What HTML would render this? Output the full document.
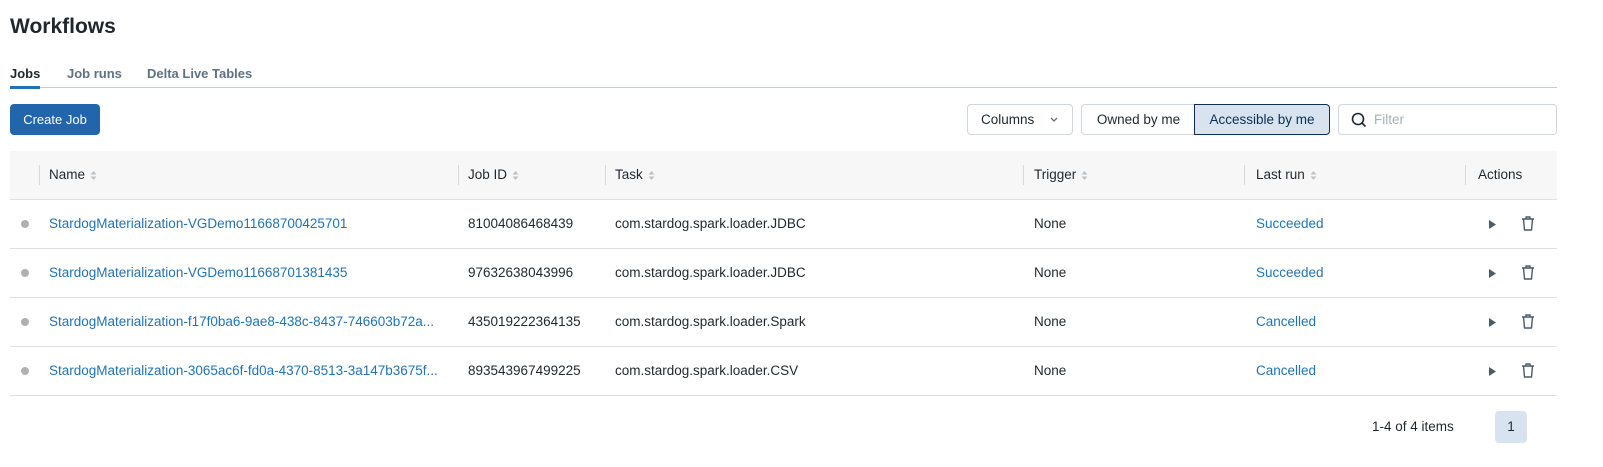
<!DOCTYPE html>
<html><head><style>
*{box-sizing:border-box;margin:0;padding:0}
body{width:1603px;height:467px;background:#fff;font-family:"Liberation Sans",Arial,sans-serif;color:#1f272d;position:relative;overflow:hidden;font-size:13.5px}
.a{position:absolute;white-space:nowrap}
h1{position:absolute;left:10px;top:15px;font-size:21px;font-weight:bold;color:#1f272d}
.tab{position:absolute;top:66px;font-size:13px;font-weight:bold;color:#5f7281}
.sep{position:absolute;width:1px;height:20px;top:165px;background:#d1d9e1}
.hl{position:absolute;left:10px;width:1547px;height:1px;background:#e0e0e0}
.lnk{color:#2272b4}
.dot{position:absolute;left:21px;width:8px;height:8px;border-radius:50%;background:#b0b0b0}
.sort{display:inline-block;vertical-align:middle;margin-left:5px;width:7px;height:11px}
</style></head><body>
<h1>Workflows</h1>
<div class="tab" style="left:10px;color:#1f272d">Jobs</div>
<div class="tab" style="left:67px">Job runs</div>
<div class="tab" style="left:147px">Delta Live Tables</div>
<div class="a" style="left:10px;top:87px;width:1547px;height:1px;background:#c4ccd6"></div>
<div class="a" style="left:10px;top:86px;width:30px;height:3px;background:#2272b4"></div>
<div class="a" style="left:10px;top:104px;width:90px;height:31px;background:#2166ab;border-radius:4px;color:#fff;font-size:13px;line-height:31px;text-align:center">Create Job</div>
<div class="a" style="left:967px;top:104px;width:106px;height:31px;border:1px solid #cfd6dc;border-radius:4px;line-height:29px;padding-left:13px">Columns<svg style="position:absolute;left:82px;top:12px" width="8" height="6"><path d="M1 1l3 3 3-3" stroke="#5f7281" fill="none" stroke-width="1.3"/></svg></div>
<div class="a" style="left:1081px;top:104px;width:115px;height:31px;border:1px solid #cfd6dc;border-radius:4px 0 0 4px;line-height:29px;text-align:center">Owned by me</div>
<div class="a" style="left:1194px;top:104px;width:136px;height:31px;border:1px solid #0e2f4f;background:#d7e4f0;border-radius:0 4px 4px 0;line-height:29px;text-align:center;color:#0e2f4f">Accessible by me</div>
<div class="a" style="left:1338px;top:104px;width:219px;height:31px;border:1px solid #cfd6dc;border-radius:4px;line-height:29px;padding-left:35px;color:#a6b0b8">Filter
<svg style="position:absolute;left:12px;top:7px" width="16" height="16"><circle cx="7" cy="7" r="5.5" stroke="#1f272d" stroke-width="1.6" fill="none"/><path d="M11 11l3.5 3.5" stroke="#1f272d" stroke-width="1.6"/></svg></div>
<div class="a" style="left:10px;top:151px;width:1547px;height:48px;background:#f7f7f7"></div>
<div class="sep" style="left:39px"></div><div class="sep" style="left:458px"></div><div class="sep" style="left:605px"></div><div class="sep" style="left:1023px"></div><div class="sep" style="left:1244px"></div><div class="sep" style="left:1465px"></div>
<svg width="0" height="0" style="position:absolute"><defs><g id="s"><path d="M0.5 4.5L3.5 1 6.5 4.5Z M0.5 6.5L3.5 10 6.5 6.5Z" fill="#bcc3c9"/></g></defs></svg>
<div class="a" style="left:49px;top:167px">Name<svg class="sort"><use href="#s"/></svg></div>
<div class="a" style="left:468px;top:167px">Job ID<svg class="sort"><use href="#s"/></svg></div>
<div class="a" style="left:615px;top:167px">Task<svg class="sort"><use href="#s"/></svg></div>
<div class="a" style="left:1034px;top:167px">Trigger<svg class="sort"><use href="#s"/></svg></div>
<div class="a" style="left:1256px;top:167px">Last run<svg class="sort"><use href="#s"/></svg></div>
<div class="a" style="left:1478px;top:167px">Actions</div>
<div class="hl" style="top:199px"></div>
<div class="hl" style="top:248px"></div>
<div class="hl" style="top:297px"></div>
<div class="hl" style="top:346px"></div>
<div class="hl" style="top:395px"></div>
<svg width="0" height="0" style="position:absolute"><defs>
<g id="p"><path d="M0 0L7 4.5 0 9Z" fill="#4a5b6a"/></g>
<g id="t"><path d="M1 3h12M5 3V1h4v2M2.5 3l1 11h7l1-11" stroke="#4a5b6a" stroke-width="1.4" fill="none" stroke-linejoin="round"/></g></defs></svg>

<div class="dot" style="top:220px"></div>
<div class="a lnk" style="left:49px;top:216px">StardogMaterialization-VGDemo11668700425701</div>
<div class="a" style="left:468px;top:216px">81004086468439</div>
<div class="a" style="left:615px;top:216px">com.stardog.spark.loader.JDBC</div>
<div class="a" style="left:1034px;top:216px">None</div>
<div class="a lnk" style="left:1256px;top:216px">Succeeded</div>
<svg class="a" style="left:1489px;top:220px" width="8" height="10"><use href="#p"/></svg>
<svg class="a" style="left:1521px;top:216px" width="14" height="16"><use href="#t"/></svg>

<div class="dot" style="top:269px"></div>
<div class="a lnk" style="left:49px;top:265px">StardogMaterialization-VGDemo11668701381435</div>
<div class="a" style="left:468px;top:265px">97632638043996</div>
<div class="a" style="left:615px;top:265px">com.stardog.spark.loader.JDBC</div>
<div class="a" style="left:1034px;top:265px">None</div>
<div class="a lnk" style="left:1256px;top:265px">Succeeded</div>
<svg class="a" style="left:1489px;top:269px" width="8" height="10"><use href="#p"/></svg>
<svg class="a" style="left:1521px;top:265px" width="14" height="16"><use href="#t"/></svg>

<div class="dot" style="top:318px"></div>
<div class="a lnk" style="left:49px;top:314px">StardogMaterialization-f17f0ba6-9ae8-438c-8437-746603b72a...</div>
<div class="a" style="left:468px;top:314px">435019222364135</div>
<div class="a" style="left:615px;top:314px">com.stardog.spark.loader.Spark</div>
<div class="a" style="left:1034px;top:314px">None</div>
<div class="a lnk" style="left:1256px;top:314px">Cancelled</div>
<svg class="a" style="left:1489px;top:318px" width="8" height="10"><use href="#p"/></svg>
<svg class="a" style="left:1521px;top:314px" width="14" height="16"><use href="#t"/></svg>

<div class="dot" style="top:367px"></div>
<div class="a lnk" style="left:49px;top:363px">StardogMaterialization-3065ac6f-fd0a-4370-8513-3a147b3675f...</div>
<div class="a" style="left:468px;top:363px">893543967499225</div>
<div class="a" style="left:615px;top:363px">com.stardog.spark.loader.CSV</div>
<div class="a" style="left:1034px;top:363px">None</div>
<div class="a lnk" style="left:1256px;top:363px">Cancelled</div>
<svg class="a" style="left:1489px;top:367px" width="8" height="10"><use href="#p"/></svg>
<svg class="a" style="left:1521px;top:363px" width="14" height="16"><use href="#t"/></svg>

<div class="a" style="left:1372px;top:419px">1-4 of 4 items</div>
<div class="a" style="left:1495px;top:411px;width:32px;height:32px;background:#d7e4f0;border-radius:4px;text-align:center;line-height:32px">1</div>
</body></html>
